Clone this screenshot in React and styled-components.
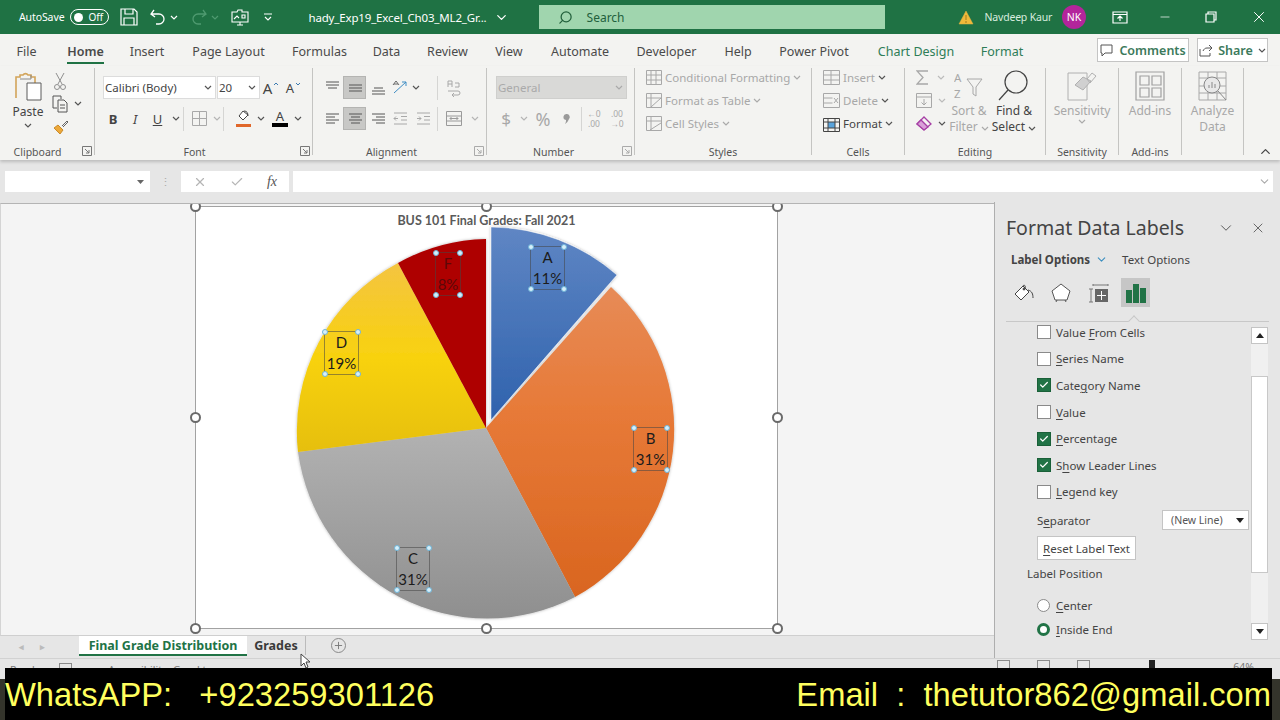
import React from "react";
import styled, { createGlobalStyle } from "styled-components";
import { Search, X, Minus, ChevronDown, ChevronUp, Plus, Check } from "lucide-react";

const GlobalStyle = createGlobalStyle`
  html, body { margin: 0; padding: 0; height: 720px; overflow: hidden; }
  body { font-family: "Noto Sans", "Open Sans", sans-serif; color: #444; }
  * { box-sizing: border-box; }
`;

const Page = styled.div`
  width: 1280px;
  height: 720px;
  overflow: hidden;
  display: flex;
  flex-direction: column;
  position: relative;
  background: #e6e6e6;
`;

/* title bar */
const TitleBar = styled.div`
  height: 34px;
  background: #1f7244;
  color: #fff;
  display: flex;
  align-items: center;
  flex: none;
`;
const TB = styled.div`
  margin-left: ${(p) => p.$ml || 0}px;
  width: ${(p) => (p.$w ? p.$w + "px" : "auto")};
  display: flex;
  align-items: center;
  justify-content: center;
  flex: none;
  font-size: ${(p) => p.$fs || 12}px;
  letter-spacing: ${(p) => p.$ls || 0}px;
  white-space: nowrap;
  color: ${(p) => p.$c || "#fff"};
`;
const Toggle = styled.div`
  width: 39px;
  height: 16px;
  border: 1px solid #fff;
  border-radius: 8px;
  display: flex;
  align-items: center;
  padding-left: 3px;
  gap: 5px;
  font-size: 10px;
  &::before {
    content: "";
    width: 9px;
    height: 9px;
    border-radius: 50%;
    background: #fff;
  }
`;
const SearchBox = styled.div`
  margin-left: 30px;
  width: 346px;
  height: 24px;
  background: #a0d5ae;
  color: #22603c;
  display: flex;
  align-items: center;
  padding-left: 19px;
  gap: 14px;
  font-size: 12px;
  flex: none;
`;
const Avatar = styled.div`
  margin-left: 10px;
  width: 24px;
  height: 24px;
  border-radius: 50%;
  background: #b3259b;
  font-size: 10.5px;
  display: flex;
  align-items: center;
  justify-content: center;
  flex: none;
`;

/* ribbon tabs */
const TabRow = styled.div`
  height: 32px;
  flex: none;
  background: #f3f3f1;
  display: flex;
  align-items: center;
  padding-left: 10px;
`;
const Tab = styled.div`
  width: ${(p) => p.$w}px;
  flex: none;
  display: flex;
  justify-content: center;
  font-size: 12.5px;
  white-space: nowrap;
  color: ${(p) => (p.$green ? "#2e7d57" : "#4a4a4a")};
  font-weight: ${(p) => (p.$active ? 600 : 400)};
  span {
    padding: 4px 0 2px;
    border-bottom: 2px solid ${(p) => (p.$active ? "#1f7244" : "transparent")};
    margin-top: 2px;
  }
`;
const TopBtn = styled.div`
  height: 24px;
  width: ${(p) => p.$w}px;
  margin-left: ${(p) => p.$ml}px;
  background: #fff;
  border: 1px solid #c4c4c4;
  display: flex;
  align-items: center;
  justify-content: center;
  gap: 5px;
  font-size: 12.5px;
  font-weight: 600;
  color: #3c7a5c;
  flex: none;
`;

/* ribbon */
const Ribbon = styled.div`
  height: 94px;
  flex: none;
  background: #f3f3f1;
  display: flex;
  padding-top: 2px;
  box-shadow: 0 2px 3px rgba(0, 0, 0, 0.18);
  position: relative;
  z-index: 1;
`;
const Group = styled.div`
  width: ${(p) => p.$w}px;
  height: 87px;
  flex: none;
  position: relative;
  border-right: 1px solid #c4c4c2;
`;
const GroupBody = styled.div`
  height: 76px;
  display: flex;
  padding-left: ${(p) => p.$pl || 0}px;
`;
const GroupLabel = styled.div`
  height: 14px;
  line-height: 14px;
  margin-top: 1px;
  padding-right: ${(p) => p.$pr || 0}px;
  text-align: center;
  font-size: 10.5px;
  color: #555;
  white-space: nowrap;
`;
const Launcher = styled.svg`
  position: absolute;
  right: 2px;
  bottom: -1px;
`;
const Stack = styled.div`
  display: flex;
  flex-direction: column;
  gap: ${(p) => p.$gap || 0}px;
  padding-top: ${(p) => p.$pt || 0}px;
  margin-top: ${(p) => p.$mt || 0}px;
`;
const Row = styled.div`
  display: flex;
  align-items: center;
  height: ${(p) => p.$h || 23}px;
  padding-left: ${(p) => p.$pl || 0}px;
`;
const Cell = styled.div`
  width: ${(p) => p.$w}px;
  height: 23px;
  flex: none;
  margin-left: ${(p) => p.$ml || 0}px;
  display: flex;
  align-items: center;
  justify-content: center;
  gap: 3px;
  font-size: ${(p) => p.$fs || 13}px;
  color: ${(p) => p.$c || "#444"};
  background: ${(p) => (p.$on ? "#c8c8c6" : "transparent")};
  border: ${(p) => (p.$on ? "1px solid #b4b4b2" : "none")};
`;
const DecimalCell = styled(Cell)`
  font-size: 8.5px;
  line-height: 10px;
  text-align: center;
  color: #a8a8a8;
`;
const FontColorCell = styled(Cell)`
  flex-direction: column;
  gap: 0;
  line-height: 13px;
  i {
    width: 16px;
    height: 4px;
    background: #000;
    display: block;
  }
`;
const Combo = styled.div`
  width: ${(p) => p.$w}px;
  height: 23px;
  margin-left: ${(p) => p.$ml || 0}px;
  flex: none;
  background: ${(p) => (p.$off ? "#d9d9d7" : "#fff")};
  border: 1px solid ${(p) => (p.$off ? "#cfcfcd" : "#dcdcdc")};
  display: flex;
  align-items: center;
  justify-content: space-between;
  padding: 0 3px 0 1px;
  font-size: 11.5px;
  color: ${(p) => (p.$off ? "#aaa" : "#444")};
`;
const VSep = styled.div`
  width: 1px;
  height: 24px;
  background: #d5d5d3;
  flex: none;
`;
const Spacer = styled.span`
  width: ${(p) => p.$w}px;
  flex: none;
`;
const ListItem = styled.div`
  height: 23px;
  display: flex;
  align-items: center;
  gap: ${(p) => p.$gap || 3}px;
  font-size: 11.5px;
  white-space: nowrap;
  color: ${(p) => (p.$off ? "#a8a8a8" : "#444")};
`;
const BigCol = styled.div`
  width: ${(p) => p.$w}px;
  margin-left: ${(p) => p.$ml || 0}px;
  flex: none;
  display: flex;
  flex-direction: column;
  align-items: center;
  padding-top: ${(p) => (p.$pt === undefined ? 3 : p.$pt)}px;
  font-size: 12px;
  line-height: 16px;
  color: ${(p) => (p.$off ? "#a8a8a8" : "#444")};
  white-space: nowrap;
  > svg:first-child {
    margin-bottom: 2px;
  }
`;
const PasteText = styled.span`
  margin: 1px 0 3px;
`;
const ChevWrap = styled.span`
  display: flex;
  margin-left: 5px;
`;
const Collapse = styled.div`
  flex: 1;
  display: flex;
  align-items: flex-end;
  justify-content: flex-end;
  padding: 0 7px 0 0;
  height: 91px;
  color: #444;
`;

/* formula bar */
const FormulaBar = styled.div`
  height: 42px;
  flex: none;
  background: #e6e6e6;
  display: flex;
  align-items: center;
  padding: 1px 7px 0 5px;
`;
const NameBox = styled.div`
  width: 145px;
  height: 21px;
  background: #fff;
  display: flex;
  align-items: center;
  justify-content: flex-end;
  padding-right: 6px;
  flex: none;
`;
const Grip = styled.div`
  width: 31px;
  text-align: center;
  color: #aaa;
  font-size: 11px;
  flex: none;
`;
const FxBox = styled.div`
  width: 108px;
  height: 21px;
  background: #fff;
  display: flex;
  align-items: center;
  justify-content: space-between;
  padding: 0 12px;
  flex: none;
  font-family: "Liberation Serif", serif;
  font-style: italic;
  font-size: 14px;
  color: #555;
`;
const FormulaInput = styled.div`
  flex: 1;
  margin-left: 4px;
  height: 21px;
  background: #fff;
  display: flex;
  align-items: center;
  justify-content: flex-end;
  padding-right: 2px;
  color: #aaa;
`;

/* main area */
const Body = styled.div`
  height: 456px;
  flex: none;
  display: flex;
`;
const LeftCol = styled.div`
  width: 994px;
  flex: none;
  display: flex;
  flex-direction: column;
`;
const Sheet = styled.div`
  height: 433px;
  margin-top: 1px;
  background: #f4f4f4;
  position: relative;
  overflow: hidden;
  border-top: 1px solid #b4b4b4;
  border-left: 1px solid #d4d4d4;
  border-bottom: 1px solid #cfcfcf;
`;
const ChartFrame = styled.div`
  position: absolute;
  left: 194px;
  top: 2px;
  width: 583px;
  height: 423px;
  background: #fff;
  border: 1px solid #a2a2a2;
`;
const ChartSvg = styled.svg`
  position: absolute;
  left: -1px;
  top: -1px;
`;
const ChartTitle = styled.div`
  position: absolute;
  left: 0;
  right: 0;
  top: 6px;
  text-align: center;
  font-family: Lato, "Liberation Sans", sans-serif;
  font-weight: 700;
  font-size: 12.5px;
  line-height: 16px;
  color: #5a5a5a;
`;
const Handle = styled.div`
  position: absolute;
  left: ${(p) => p.$x}px;
  top: ${(p) => p.$y}px;
  width: 11px;
  height: 11px;
  margin: -6px 0 0 -6px;
  background: #fff;
  border: 2px solid #6a6a6a;
  border-radius: 50%;
`;
const DataLabel = styled.div`
  position: absolute;
  left: ${(p) => p.$x}px;
  top: ${(p) => p.$y}px;
  width: ${(p) => p.$w}px;
  height: 44px;
  border: 1px solid rgba(70, 70, 70, 0.55);
  font-family: Lato, "Liberation Sans", sans-serif;
  font-size: 15px;
  line-height: 21px;
  text-align: center;
  color: ${(p) => p.$c || "#1c1c1c"};
  white-space: nowrap;
`;
const Dot = styled.div`
  position: absolute;
  width: 6px;
  height: 6px;
  border-radius: 50%;
  background: #d6effa;
  border: 1px solid #6fb5d8;
  ${(p) => (p.$top ? "top: -3px;" : "bottom: -3px;")}
  ${(p) => (p.$left ? "left: -3px;" : "right: -3px;")}
`;

/* sheet tabs */
const SheetTabs = styled.div`
  height: 22px;
  flex: none;
  background: #e6e6e6;
  display: flex;
  align-items: flex-start;
  font-size: 12.5px;
  font-weight: 700;
`;
const NavArrows = styled.div`
  width: 79px;
  height: 20px;
  display: flex;
  align-items: center;
  gap: 16px;
  padding-left: 19px;
  color: #bbb;
  font-size: 9px;
  flex: none;
`;
const SheetTab = styled.div`
  width: ${(p) => p.$w}px;
  height: ${(p) => (p.$active ? 20 : 19)}px;
  flex: none;
  display: flex;
  align-items: center;
  justify-content: center;
  white-space: nowrap;
  color: ${(p) => (p.$active ? "#217346" : "#3a3a3a")};
  background: ${(p) => (p.$active ? "#fff" : "transparent")};
  border-bottom: ${(p) => (p.$active ? "2px solid #217346" : "none")};
  border-right: ${(p) => (p.$active ? "none" : "1px solid #bbb")};
`;
const AddSheet = styled.div`
  margin: 2px 0 0 25px;
  width: 15px;
  height: 15px;
  border: 1px solid #8a8a8a;
  border-radius: 50%;
  color: #777;
  display: flex;
  align-items: center;
  justify-content: center;
`;
const Cursor = styled.svg`
  position: absolute;
  left: 300px;
  top: 653px;
  z-index: 2;
`;

/* side panel */
const Panel = styled.div`
  width: 286px;
  flex: none;
  background: #e6e6e6;
  border-left: 1px solid #aeaeae;
  display: flex;
  flex-direction: column;
`;
const PanelHead = styled.div`
  height: 46px;
  flex: none;
  display: flex;
  align-items: center;
  padding: 5px 14px 0 11px;
  font-size: 19.5px;
  color: #444;
  white-space: nowrap;
`;
const PanelHeadBtns = styled.div`
  margin-left: auto;
  display: flex;
  align-items: center;
  gap: 15px;
  color: #555;
`;
const OptionTabs = styled.div`
  height: 22px;
  flex: none;
  display: flex;
  align-items: center;
  padding-left: 16px;
  font-size: 11.5px;
`;
const OptBold = styled.span`
  font-weight: 700;
  color: #444;
`;
const TextOption = styled.span`
  margin-left: 14px;
`;
const IconTabs = styled.div`
  height: 51px;
  flex: none;
  padding: 8px 0 0 15px;
  display: flex;
  align-items: flex-start;
`;
const IconTab = styled.div`
  width: ${(p) => p.$w}px;
  height: 29px;
  flex: none;
  margin-left: ${(p) => p.$ml || 0}px;
  display: flex;
  align-items: center;
  justify-content: center;
  background: ${(p) => (p.$on ? "#c6c6c6" : "transparent")};
`;
const Divider = styled.div`
  height: 1px;
  flex: none;
  margin: 0 11px 0 11px;
  background: #c8c8c8;
  position: relative;
  &::after {
    content: "";
    position: absolute;
    left: 124px;
    top: -4px;
    width: 7px;
    height: 7px;
    transform: rotate(45deg);
    background: #e6e6e6;
    border-left: 1px solid #c8c8c8;
    border-top: 1px solid #c8c8c8;
  }
`;
const PanelMain = styled.div`
  flex: 1;
  min-height: 0;
  display: flex;
  padding-right: 12px;
  overflow: hidden;
`;
const OptionList = styled.div`
  flex: 1;
  margin-top: -3px;
  padding-left: 42px;
  font-size: 11.5px;
  color: #444;
  u {
    text-underline-offset: 2px;
  }
`;
const OptionRow = styled.div`
  height: 26.6px;
  display: flex;
  align-items: center;
  gap: 5px;
  white-space: nowrap;
`;
const Box = styled.div`
  width: 14px;
  height: 14px;
  flex: none;
  background: ${(p) => (p.$on ? "#217346" : "#fff")};
  border: 1px solid ${(p) => (p.$on ? "#1a6038" : "#8a8a8a")};
  color: #fff;
  display: flex;
  align-items: center;
  justify-content: center;
`;
const SepRow = styled.div`
  height: 28px;
  margin-top: 1px;
  display: flex;
  align-items: center;
  justify-content: space-between;
  padding-right: 2px;
`;
const SepSelect = styled.div`
  width: 87px;
  height: 20px;
  background: #fff;
  border: 1px solid #c4c4c4;
  display: flex;
  align-items: center;
  justify-content: space-between;
  padding: 0 4px 0 8px;
  font-size: 10.5px;
  color: #555;
`;
const ResetBtn = styled.div`
  width: 99px;
  height: 24px;
  margin-top: 2px;
  background: #fff;
  border: 1px solid #c4c4c4;
  display: flex;
  align-items: center;
  justify-content: center;
  white-space: nowrap;
`;
const PosTitle = styled.div`
  margin: 6px 0 0 -10px;
  height: 16px;
  line-height: 16px;
`;
const RadioRow = styled.div`
  height: 24px;
  display: flex;
  align-items: center;
  gap: 6px;
  margin-top: ${(p) => p.$mt || 0}px;
  white-space: nowrap;
`;
const Radio = styled.div`
  width: 13px;
  height: 13px;
  border-radius: 50%;
  flex: none;
  background: #fff;
  border: ${(p) => (p.$on ? "3px solid #217346" : "1px solid #8a8a8a")};
`;
const ScrollBar = styled.div`
  width: 17px;
  flex: none;
  margin-top: 5px;
  height: 313px;
  display: flex;
  flex-direction: column;
  background: #f0f0f0;
`;
const ScrollBtn = styled.div`
  height: 17px;
  flex: none;
  background: #fff;
  border: 1px solid #c4c4c4;
  display: flex;
  align-items: center;
  justify-content: center;
  margin-top: ${(p) => (p.$down ? "auto" : 0)};
`;
const ScrollThumb = styled.div`
  height: 197px;
  margin-top: 32px;
  flex: none;
  background: #fff;
  border: 1px solid #c8c8c8;
`;

/* status + banner */
const StatusBar = styled.div`
  height: 10px;
  flex: none;
  background: #e6e6e6;
  border-top: 1px solid #d2d2d2;
  overflow: hidden;
  display: flex;
  align-items: flex-start;
  padding: 4px 0 0 10px;
  font-size: 10.5px;
  line-height: 14px;
  color: #777;
  white-space: nowrap;
`;
const StatusIcon = styled.div`
  width: 13px;
  height: 10px;
  margin-left: ${(p) => p.$ml}px;
  margin-top: ${(p) => (p.$up ? -3 : 0)}px;
  border: 1px solid #8a8a8a;
  flex: none;
`;
const StatusText = styled.span`
  margin-left: ${(p) => p.$ml}px;
  margin-top: ${(p) => (p.$up ? -3 : 0)}px;
`;
const ZoomThumb = styled.div`
  width: 6px;
  height: 10px;
  margin: -3px 0 0 59px;
  background: #222;
  flex: none;
`;
const Banner = styled.div`
  flex: 1;
  background: linear-gradient(#e6e6e6 11px, #34342b 11px);
  padding: 0 8px 0 5px;
  display: flex;
`;
const BannerInner = styled.div`
  flex: 1;
  background: #000;
  color: #ffff5e;
  display: flex;
  align-items: center;
  justify-content: space-between;
  padding: 1px 1px 0 0;
  font-family: "Liberation Sans", Arial, sans-serif;
  font-size: 32.7px;
  line-height: 51px;
  white-space: pre;
`;
const SortLetter = styled.text`
  font-family: "Noto Sans", sans-serif;
  font-size: 11.5px;
  fill: #a8a8a8;
  stroke: none;
`;

/* icons */
const S = ({ w = 16, h = 16, vb, sw = 1, c = "#555", children, ...rest }) => (
  <svg width={w} height={h} viewBox={vb || `0 0 ${w} ${h}`} fill="none" stroke={c} strokeWidth={sw} {...rest}>
    {children}
  </svg>
);
const Chev = ({ c = "#555" }) => (
  <S w={8} h={5} c={c} sw={1.2}>
    <path d="M1 1l3 3 3-3" />
  </S>
);
const Launch = ({ c = "#777" }) => (
  <Launcher width="10" height="10" viewBox="0 0 10 10" fill="none" stroke={c}>
    <path d="M.5 .5h9v9h-9zM3 3l4 4M7 4v3H4" />
  </Launcher>
);
const Lines = ({ d, c = "#555" }) => (
  <S w={16} h={16} c={c}>
    {d.map((l, i) => (
      <path key={i} d={`M${l[0]} ${l[2]}H${l[1]}`} />
    ))}
  </S>
);
const Bucket = () => (
  <S w={20} h={20} c="#444">
    <path d="M9 3l-8 8 6 6 8-8z" fill="#fff" />
    <path d="M9 3c1-2 3 0 2 2M14 7c4 1 5 4 5 8" />
    <circle cx="10" cy="6" r="1" fill="#444" />
  </S>
);
const UpTick = ({ down }) => (
  <S w={6} h={4} c="#3c7ab0" style={{ marginTop: -8, marginLeft: -2 }}>
    <path d={down ? "M1 1l2 2 2-2" : "M1 3l2-2 2 2"} />
  </S>
);

const GRADE_LABELS = [
  { id: "A", pct: "11%", x: 334, y: 39, w: 35 },
  { id: "F", pct: "8%", x: 239, y: 45, w: 26, c: "#5c0808" },
  { id: "D", pct: "19%", x: 128, y: 124, w: 35 },
  { id: "B", pct: "31%", x: 437, y: 220, w: 35 },
  { id: "C", pct: "31%", x: 200, y: 340, w: 34 },
];

const OPTIONS = [
  { key: "v", node: <>Value <u>F</u>rom Cells</> },
  { key: "s", node: <><u>S</u>eries Name</> },
  { key: "c", on: true, node: <>Cate<u>g</u>ory Name</> },
  { key: "a", node: <><u>V</u>alue</> },
  { key: "p", on: true, node: <><u>P</u>ercentage</> },
  { key: "l", on: true, node: <>S<u>h</u>ow Leader Lines</> },
  { key: "k", node: <><u>L</u>egend key</> },
];

const TABS = [
  ["File", 33], ["Home", 85, "active"], ["Insert", 38], ["Page Layout", 125], ["Formulas", 57],
  ["Data", 77], ["Review", 45], ["View", 78], ["Automate", 64], ["Developer", 109],
  ["Help", 34], ["Power Pivot", 118], ["Chart Design", 86, "green"], ["Format", 86, "green"],
];

const PieChart = () => (
  <ChartSvg width="583" height="423" viewBox="195 206 583 423">
    <defs>
      <linearGradient id="ga" x1="0" y1="0" x2="0" y2="1">
        <stop offset="0" stopColor="#5f86c4" />
        <stop offset="1" stopColor="#2f62ad" />
      </linearGradient>
      <linearGradient id="gb" x1="0" y1="0" x2="0" y2="1">
        <stop offset="0" stopColor="#e78b57" />
        <stop offset="0.4" stopColor="#e77a38" />
        <stop offset="1" stopColor="#d9651f" />
      </linearGradient>
      <linearGradient id="gc" x1="0" y1="0" x2="0" y2="1">
        <stop offset="0" stopColor="#b2b2b2" />
        <stop offset="1" stopColor="#8f8f8f" />
      </linearGradient>
      <linearGradient id="gd" x1="0" y1="0" x2="0" y2="1">
        <stop offset="0" stopColor="#f4c440" />
        <stop offset="0.5" stopColor="#f8d20f" />
        <stop offset="1" stopColor="#e6bf08" />
      </linearGradient>
      <filter id="soft" x="-5%" y="-5%" width="110%" height="110%">
        <feDropShadow dx="0" dy="0" stdDeviation="1.6" floodColor="#000" floodOpacity="0.3" />
      </filter>
    </defs>
    <g stroke="none" filter="url(#soft)">
      <path d="M486 428L611 287A190 191 0 0 1 575 597Z" fill="url(#gb)" />
      <path d="M486 428L575 597A191 193 0 0 1 298 452Z" fill="url(#gc)" />
      <path d="M486 428L298 452A190 190 0 0 1 398 263Z" fill="url(#gd)" />
      <path d="M486 428L398 263A188 188 0 0 1 486 239Z" fill="#ae0000" />
    </g>
    <path d="M491 420V227A193 193 0 0 1 617 275Z" fill="url(#ga)" stroke="#fff" strokeWidth="0.5" filter="url(#soft)" />
  </ChartSvg>
);

export default function App() {
  return (
    <Page>
      <GlobalStyle />
      <TitleBar>
        <TB $ml={19} $fs={10.5} $ls={-0.1}>AutoSave</TB>
        <TB $ml={6}><Toggle>Off</Toggle></TB>
        <TB $ml={11}>
          <S w={18} h={18} c="#fff" sw={1.2}>
            <path d="M1 1h13l3 3v13H1zM5 1v5h8V1M4 17v-7h10v7" />
          </S>
        </TB>
        <TB $ml={11}>
          <S w={18} h={16} c="#fff" sw={1.3}>
            <path d="M5 1L2 5l4 3M2 5h8a5 5 0 0 1 0 10H7" />
          </S>
        </TB>
        <TB $ml={3}><Chev c="#fff" /></TB>
        <TB $ml={12}>
          <S w={18} h={16} c="#4f9a70" sw={1.3}>
            <path d="M13 1l3 4-4 3M16 5H8a5 5 0 0 0 0 10h3" />
          </S>
        </TB>
        <TB $ml={3}><Chev c="#4f9a70" /></TB>
        <TB $ml={12}>
          <S w={18} h={18} c="#fff" sw={1.1}>
            <path d="M1 14V4h5l1-2h4v2h6v10zM6 17h6M9 14v3M3 11l3-3 2 2M11 7h3v3h-3z" />
          </S>
        </TB>
        <TB $ml={14}>
          <S w={10} h={8} c="#fff" sw={1.1}>
            <path d="M1 1h8M2 4l3 3 3-3" />
          </S>
        </TB>
        <TB $ml={35} $fs={11.5} $ls={-0.16}>hady_Exp19_Excel_Ch03_ML2_Gr...</TB>
        <TB $ml={7}><ChevronDown size={15} /></TB>
        <SearchBox>
          <Search size={15} style={{ transform: "scaleX(-1)" }} />
          Search
        </SearchBox>
        <TB $ml={73}>
          <S w={16} h={15} c="#e3b341" sw={0.5}>
            <path d="M8 1l7 13H1z" fill="#f0b93a" />
            <path d="M8 5v5M8 11v2" stroke="#5a3c00" />
          </S>
        </TB>
        <TB $ml={11} $fs={10.5} $ls={-0.2} $c="#d8ecdf">Navdeep Kaur</TB>
        <Avatar>NK</Avatar>
        <TB $ml={26}>
          <S w={16} h={13} c="#fff" sw={1.2}>
            <path d="M1 1h14v11H1zM1 3.500h14M8 10V5M5.500 7.500L8 5l2.500 2.500" />
          </S>
        </TB>
        <TB $ml={30}><Minus size={14} strokeWidth={1.2} /></TB>
        <TB $ml={33}>
          <S w={12} h={12} c="#fff" sw={1.2}>
            <path d="M3 3V1h8v8H9M1 3h8v8H1z" />
          </S>
        </TB>
        <TB $ml={33}><X size={18} strokeWidth={1.3} /></TB>
      </TitleBar>

      <TabRow>
        {TABS.map(([t, w, kind]) => (
          <Tab key={t} $w={w} $active={kind === "active"} $green={kind === "green"}><span>{t}</span></Tab>
        ))}
        <TopBtn $w={92} $ml={52}>
          <S w={14} h={13} c="#555"><path d="M1 1h11v8H5l-3 3V9H1z" /></S>
          Comments
        </TopBtn>
        <TopBtn $w={71} $ml={8}>
          <S w={14} h={13} c="#555"><path d="M10 1l3 3-3 3M13 4H8C6 4 5 5 4 7M1 5v7h10V9" /></S>
          Share
          <Chev />
        </TopBtn>
      </TabRow>

      <Ribbon>
        <Group $w={95}>
          <GroupBody>
            <BigCol $w={44} $pt={3} $ml={6}>
              <S w={30} h={30} c="#7a7a7a">
                <path d="M3 27V6h4V4h3a3 3 0 0 1 5 0h3v2h4v6" stroke="#d2a45a" strokeWidth="1.6" />
                <path d="M7 8h11V4" stroke="#8a8a8a" />
                <path d="M14 12h14v17H14z" fill="#fff" stroke="#5a5a5a" />
              </S>
              <PasteText>Paste</PasteText>
              <Chev />
            </BigCol>
            <Stack $pt={1}>
              <Row $pl={3}>
                <S w={14} h={18} c="#8f8f8f"><path d="M3 1l6 11M11 1L5 12" /><circle cx="4" cy="15" r="2.500" /><circle cx="10" cy="15" r="2.500" /></S>
              </Row>
              <Row $pl={2}>
                <S w={17} h={18} c="#555"><path d="M1 1h8v3M1 1v12h4M6 5h6l3 3v9H6zM8 10h5M8 13h5" /></S>
                <ChevWrap><Chev /></ChevWrap>
              </Row>
              <Row $pl={3}>
                <S w={16} h={16} c="#666">
                  <path d="M1 9l6 6 3-4-5-5z" fill="#eda93a" stroke="#c98a2a" />
                  <path d="M9 7l5-5 1 1-5 5" />
                </S>
              </Row>
            </Stack>
          </GroupBody>
          <GroupLabel $pr={19}>Clipboard</GroupLabel>
          <Launch />
        </Group>

        <Group $w={218}>
          <GroupBody>
            <Stack $gap={8} $pt={8}>
              <Row $pl={8}>
                <Combo $w={113}>Calibri (Body)<Chev /></Combo>
                <Combo $w={43} $ml={1}>20<Chev /></Combo>
                <Cell $w={22} $fs={15}>A<UpTick /></Cell>
                <Cell $w={23} $fs={13}>A<UpTick down /></Cell>
              </Row>
              <Row $pl={7}>
                <Cell $w={22} $fs={13}><b>B</b></Cell>
                <Cell $w={22} $fs={13}><i>I</i></Cell>
                <Cell $w={23} $fs={13}><u>U</u></Cell>
                <Cell $w={14}><Chev /></Cell>
                <VSep />
                <Cell $w={24} $ml={3}>
                  <S w={15} h={15} c="#a8a8a8"><path d="M.5 .5h14v14H.5zM7.500 .5v14M.5 7.500h14" /></S>
                </Cell>
                <Cell $w={12}><Chev c="#b5b5b5" /></Cell>
                <VSep />
                <Cell $w={23} $ml={8}>
                  <S w={17} h={18} c="#444">
                    <path d="M8 1l-4 5 4 4 5-5z" fill="#fff" />
                    <path d="M9 1c3 0 4 2 4 5" />
                    <path d="M1 14h15v3H1z" fill="#e0672a" stroke="none" />
                  </S>
                </Cell>
                <Cell $w={12}><Chev /></Cell>
                <FontColorCell $w={26} $fs={13}>
                  A
                  <i />
                </FontColorCell>
                <Cell $w={10}><Chev /></Cell>
              </Row>
            </Stack>
          </GroupBody>
          <GroupLabel $pr={18}>Font</GroupLabel>
          <Launch />
        </Group>

        <Group $w={174}>
          <GroupBody>
            <Stack $gap={8} $pt={8}>
              <Row $pl={7}>
                <Cell $w={23}><Lines d={[[2, 15, 2], [2, 15, 5], [4, 13, 8]]} /></Cell>
                <Cell $w={23} $on><Lines d={[[2, 15, 5], [2, 15, 8], [2, 15, 11]]} /></Cell>
                <Cell $w={23}><Lines d={[[4, 13, 8], [2, 15, 11], [2, 15, 14]]} /></Cell>
                <Cell $w={34}>
                  <S w={17} h={17} c="#666"><path d="M2 14L14 3M10 3h4v4" stroke="#3f8dc4" /><path d="M1 6l3-4 3 4M2 5h4" /></S>
                  <Chev />
                </Cell>
                <Spacer $w={14} />
                <VSep />
                <Cell $w={32}>
                  <S w={16} h={18} c="#a8a8a8"><path d="M2 8V2h4v6M2 5h4M9 4h4v4H9M2 12h10a2 2 0 0 1 0 4H6l2-2M6 16l2 2" /></S>
                </Cell>
              </Row>
              <Row $pl={7}>
                <Cell $w={23}><Lines d={[[2, 15, 3], [2, 11, 6], [2, 15, 9], [2, 11, 12]]} /></Cell>
                <Cell $w={23} $on><Lines d={[[2, 15, 3], [4, 13, 6], [2, 15, 9], [4, 13, 12]]} /></Cell>
                <Cell $w={23}><Lines d={[[2, 15, 3], [6, 15, 6], [2, 15, 9], [6, 15, 12]]} /></Cell>
                <Cell $w={23}>
                  <S w={15} h={14} c="#a8a8a8"><path d="M1 1h13M8 4.500h6M8 8h6M1 12h13M5 6.500H1M3 4.500L1 6.500l2 2" /></S>
                </Cell>
                <Cell $w={23}>
                  <S w={15} h={14} c="#a8a8a8"><path d="M1 1h13M8 4.500h6M8 8h6M1 12h13M1 6.500h4M3 4.500l2 2-2 2" /></S>
                </Cell>
                <Spacer $w={2} />
                <VSep />
                <Cell $w={32}>
                  <S w={16} h={15} c="#9a9a9a"><path d="M.5 .5h15v14H.5zM.5 5h15M.5 10h15M4 7.500h8M5.500 6L4 7.500 5.500 9M10.500 6L12 7.500 10.500 9" /></S>
                </Cell>
                <Cell $w={10}><Chev c="#b5b5b5" /></Cell>
              </Row>
            </Stack>
          </GroupBody>
          <GroupLabel $pr={16}>Alignment</GroupLabel>
          <Launch c="#aaa" />
        </Group>

        <Group $w={148}>
          <GroupBody>
            <Stack $gap={8} $pt={8}>
              <Row $pl={9}>
                <Combo $w={131} $off>General<Chev c="#aaa" /></Combo>
              </Row>
              <Row $pl={10}>
                <Cell $w={18} $fs={17} $c="#a8a8a8">$</Cell>
                <Cell $w={18}><Chev c="#b5b5b5" /></Cell>
                <Cell $w={20} $fs={18} $c="#a8a8a8">%</Cell>
                <Cell $w={28}>
                  <S w={8} h={12} c="#9a9a9a"><path d="M4 1a3 3 0 0 1 2 5c-1 2-2 4-4 5 1-2 1-3 1-4a3 3 0 0 1 1-6z" fill="#9a9a9a" stroke="none" /></S>
                </Cell>
                <VSep />
                <DecimalCell $w={24}>←0<br />.00</DecimalCell>
                <DecimalCell $w={22}>.00<br />→0</DecimalCell>
              </Row>
            </Stack>
          </GroupBody>
          <GroupLabel $pr={14}>Number</GroupLabel>
          <Launch c="#aaa" />
        </Group>

        <Group $w={177}>
          <GroupBody $pl={11}>
            <Stack $mt={-2}>
              <ListItem $off>
                <S w={16} h={16} c="#a8a8a8"><path d="M.5 .5h15v14H.5zM.5 5h15M.5 10h15M5 .5v14M10 .5v14" /></S>
                Conditional Formatting <Chev c="#aaa" />
              </ListItem>
              <ListItem $off>
                <S w={16} h={16} c="#a8a8a8"><path d="M.5 .5h15v14H.5zM.5 5h15M5 .5v14M5 14L15 5" /></S>
                Format as Table <Chev c="#aaa" />
              </ListItem>
              <ListItem $off>
                <S w={16} h={16} c="#a8a8a8"><path d="M.5 .5h15v14H.5zM.5 5h15M5 .5v14M4 14L15 7" /></S>
                Cell Styles <Chev c="#aaa" />
              </ListItem>
            </Stack>
          </GroupBody>
          <GroupLabel>Styles</GroupLabel>
        </Group>

        <Group $w={93}>
          <GroupBody $pl={11}>
            <Stack $mt={-2}>
              <ListItem $off>
                <S w={17} h={16} c="#a8a8a8"><path d="M.5 .5h16v14H.5zM8 .5v14M.5 5h16M.5 10h16" /></S>
                Insert <Chev />
              </ListItem>
              <ListItem $off>
                <S w={17} h={16} c="#a8a8a8"><path d="M.5 .5h16v14H.5zM11 5l4 5M15 5l-4 5M.5 5h9M.5 10h9" /></S>
                Delete <Chev />
              </ListItem>
              <ListItem>
                <S w={17} h={16} c="#444"><path d="M.5 2.500h16v13H.5z" /><path d="M5 6h7v6H5z" fill="#5aa4dc" stroke="none" /><path d="M.5 6h16M.5 12h16M5 2.500v13M12 2.500v13" /></S>
                Format <Chev />
              </ListItem>
            </Stack>
          </GroupBody>
          <GroupLabel>Cells</GroupLabel>
        </Group>

        <Group $w={141}>
          <GroupBody $pl={11}>
            <Stack $mt={-2}>
              <ListItem $off $gap={8}>
                <S w={13} h={15} c="#a8a8a8" sw={1.3}><path d="M12 1H1l6 6.500L1 14h11" /></S>
                <Chev c="#bbb" />
              </ListItem>
              <ListItem $off $gap={6}>
                <S w={16} h={15} c="#a8a8a8"><path d="M.5 .5h15v14H.5zM.5 4h15M8 6v6M5.500 9.500L8 12l2.500-2.500" /></S>
                <Chev c="#bbb" />
              </ListItem>
              <ListItem $gap={6}>
                <S w={16} h={15} c="#a63fa5" sw={1.3}><path d="M1 8l7-7 7 7-7 6z" /><path d="M1 8l4-4 7 7-4 3z" fill="#d9a0d8" /></S>
                <Chev />
              </ListItem>
            </Stack>
            <BigCol $w={44} $off $pt={3} $ml={1}>
              <S w={30} h={30} c="#a8a8a8">
                <SortLetter x="0" y="11">A</SortLetter>
                <SortLetter x="0" y="27">Z</SortLetter>
                <path d="M13 8h15l-6 8v9l-3-2v-7z" />
              </S>
              Sort &amp;
              <span>Filter <Chev c="#aaa" /></span>
            </BigCol>
            <BigCol $w={46} $pt={1}>
              <S w={32} h={32} c="#444" sw={1.2}><circle cx="18" cy="13" r="11" /><path d="M10 21L1 31" /></S>
              Find &amp;
              <span>Select <Chev /></span>
            </BigCol>
          </GroupBody>
          <GroupLabel>Editing</GroupLabel>
        </Group>

        <Group $w={73}>
          <GroupBody>
            <BigCol $w={72} $off>
              <S w={30} h={30} c="#b0b0b0"><path d="M1 2h19v27H1z" /><path d="M8 14l8-8 8 4-8 9z" fill="#d0d0d0" /><path d="M20 8l5-6 4 3-6 7z" /></S>
              Sensitivity
              <Chev c="#aaa" />
            </BigCol>
          </GroupBody>
          <GroupLabel>Sensitivity</GroupLabel>
        </Group>

        <Group $w={63}>
          <GroupBody>
            <BigCol $w={62} $off>
              <S w={30} h={30} c="#a0a0a0" sw={1.2}><path d="M1 1h28v28H1zM5 5h9v9H5zM17 5h9v9h-9zM5 17h9v9H5zM17 17h9v9h-9z" /></S>
              Add-ins
            </BigCol>
          </GroupBody>
          <GroupLabel>Add-ins</GroupLabel>
        </Group>

        <Group $w={62}>
          <GroupBody>
            <BigCol $w={61} $off>
              <S w={30} h={30} c="#a8a8a8"><path d="M1 1h27v28H1zM1 7h27M10 1v28M19 1v28M1 15h27M1 22h27" /><circle cx="14" cy="14" r="8" fill="#e8e8e8" stroke="#888" /><path d="M11 17v-3M14 17v-6M17 17v-4M20 20l8 9" stroke="#888" /></S>
              Analyze
              <span>Data</span>
            </BigCol>
          </GroupBody>
        </Group>
        <Collapse><ChevronUp size={15} /></Collapse>
      </Ribbon>

      <FormulaBar>
        <NameBox>
          <S w={7} h={4} c="#666"><path d="M0 0h7L3.500 4z" fill="#666" stroke="none" /></S>
        </NameBox>
        <Grip>⋮</Grip>
        <FxBox>
          <X size={14} color="#b5b5b5" />
          <Check size={14} color="#b5b5b5" />
          <span>fx</span>
        </FxBox>
        <FormulaInput><ChevronDown size={13} /></FormulaInput>
      </FormulaBar>

      <Body>
        <LeftCol>
          <Sheet>
            <ChartFrame>
              <PieChart />
              <ChartTitle>BUS 101 Final Grades: Fall 2021</ChartTitle>
              {GRADE_LABELS.map((l) => (
                <DataLabel key={l.id} $x={l.x} $y={l.y} $w={l.w} $c={l.c}>
                  {l.id}
                  <br />
                  {l.pct}
                  <Dot $top $left />
                  <Dot $top />
                  <Dot $left />
                  <Dot />
                </DataLabel>
              ))}
              <Handle $x={0} $y={0} />
              <Handle $x={291} $y={0} />
              <Handle $x={582} $y={0} />
              <Handle $x={0} $y={211} />
              <Handle $x={582} $y={211} />
              <Handle $x={0} $y={422} />
              <Handle $x={291} $y={422} />
              <Handle $x={582} $y={422} />
            </ChartFrame>
          </Sheet>
          <SheetTabs>
            <NavArrows><span>◂</span><span>▸</span></NavArrows>
            <SheetTab $w={168} $active>Final Grade Distribution</SheetTab>
            <SheetTab $w={59}>Grades</SheetTab>
            <AddSheet><Plus size={11} /></AddSheet>
          </SheetTabs>
        </LeftCol>

        <Panel>
          <PanelHead>
            Format Data Labels
            <PanelHeadBtns>
              <ChevronDown size={18} strokeWidth={1.3} />
              <X size={16} strokeWidth={1.3} />
            </PanelHeadBtns>
          </PanelHead>
          <OptionTabs>
            <OptBold>Label Options</OptBold>
            <ChevronDown size={13} color="#3c8fc0" style={{ marginLeft: 5 }} />
            <TextOption>Text Options</TextOption>
          </OptionTabs>
          <IconTabs>
            <IconTab $w={27}><Bucket /></IconTab>
            <IconTab $w={27} $ml={10}>
              <S w={20} h={20} c="#555"><path d="M10 1l9 7-3 9H4L1 8z" fill="#fff" /><path d="M5 19l1-2M15 19l-1-2" /></S>
            </IconTab>
            <IconTab $w={27} $ml={11}>
              <S w={22} h={20} c="#777"><path d="M5 2h15M5 1v2M20 1v2M1 6h4M1 19h4M3 6v13" /><path d="M7 6h13v13H7z" fill="#666" stroke="none" /><path d="M13.500 8v9M9 12.500h9" stroke="#fff" /></S>
            </IconTab>
            <IconTab $w={29} $ml={9} $on>
              <S w={20} h={20} c="none"><path d="M0 7h6v13H0zM7 1h6v19H7zM14 5h6v15h-6z" fill="#217346" /></S>
            </IconTab>
          </IconTabs>
          <Divider />
          <PanelMain>
            <OptionList>
              {OPTIONS.map((o) => (
                <OptionRow key={o.key}>
                  <Box $on={o.on}>{o.on && <Check size={10} strokeWidth={3} />}</Box>
                  <span>{o.node}</span>
                </OptionRow>
              ))}
              <SepRow>
                <span>S<u>e</u>parator</span>
                <SepSelect>
                  (New Line)
                  <S w={8} h={5}><path d="M0 0h8L4 5z" fill="#222" stroke="none" /></S>
                </SepSelect>
              </SepRow>
              <ResetBtn><span><u>R</u>eset Label Text</span></ResetBtn>
              <PosTitle>Label Position</PosTitle>
              <RadioRow $mt={11}><Radio /><span><u>C</u>enter</span></RadioRow>
              <RadioRow><Radio $on /><span><u>I</u>nside End</span></RadioRow>
            </OptionList>
            <ScrollBar>
              <ScrollBtn><S w={8} h={5}><path d="M0 5h8L4 0z" fill="#222" stroke="none" /></S></ScrollBtn>
              <ScrollThumb />
              <ScrollBtn $down><S w={8} h={5}><path d="M0 0h8L4 5z" fill="#222" stroke="none" /></S></ScrollBtn>
            </ScrollBar>
          </PanelMain>
        </Panel>
      </Body>

      <StatusBar>
        <span>Ready</span>
        <StatusIcon $ml={19} />
        <StatusText $ml={36}>Accessibility: Good to go</StatusText>
        <StatusIcon $ml={769} $up />
        <StatusIcon $ml={27} $up />
        <StatusIcon $ml={27} $up />
        <ZoomThumb />
        <StatusText $ml={78} $up>64%</StatusText>
      </StatusBar>
      <Banner>
        <BannerInner>
          <span>WhatsAPP:   +923259301126</span>
          <span>Email  :  thetutor862@gmail.com</span>
        </BannerInner>
      </Banner>

      <Cursor width="13" height="16" viewBox="0 0 13 16">
        <path d="M1 1v12l3-3 2 5 2-1-2-5h4z" fill="#fff" stroke="#444" />
      </Cursor>
    </Page>
  );
}
